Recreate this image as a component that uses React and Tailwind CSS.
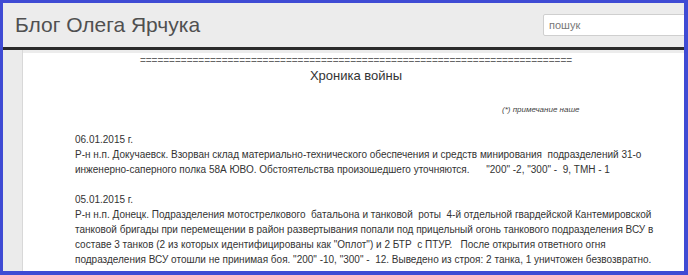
export default function App() {
  const eq = "=".repeat(74);
  return (
    <div className="w-[688px] h-[275px] bg-[#3f4bd4] pt-[3px] pl-[3px] pr-[4px] pb-[4px] overflow-hidden" style={{ fontFamily: '"Liberation Sans", Arial, sans-serif' }}>
      <div className="h-full bg-white flex flex-col overflow-hidden">
        <header className="h-[47px] shrink-0 bg-[#ececec] border-b-[3px] border-[#2b2b2b] flex items-center pl-[12px] overflow-hidden">
          <div className="text-[21px] leading-[24px] text-[#505050]">Блог Олега Ярчука</div>
          <div className="ml-auto w-[150px] mr-[-9px] h-[22px] shrink-0 bg-white border border-[#cfcfcf] rounded-l-[2px] flex items-center pl-[5px] text-[11px] text-[#777]">пошук</div>
        </header>
        <div className="flex-1 flex min-h-0">
          <div className="w-[20px] shrink-0 bg-[#ebebeb] border-r border-[#d8d8d8]" />
          <div className="flex-1 min-w-0 border-t-[3px] border-[#ececec]">
            <div className="pl-[52px] pr-[47px] text-[#333] text-[10px] leading-[15px]">
              <div className="text-center text-[#666] whitespace-nowrap">{eq}</div>
              <div className="text-center text-[13px] leading-[16px] text-[#333]">Хроника войны</div>
              <div className="mt-[21px] pl-[427px] text-[8px] leading-[10px] italic text-[#444] whitespace-nowrap">(*) примечание наше</div>
              <div className="mt-[17px] whitespace-pre">
                <div>06.01.2015 г.</div>
                <div>Р-н н.п. Докучаевск. Взорван склад материально-технического обеспечения и средств минирования  подразделений 31-о</div>
                <div>инженерно-саперного полка 58А ЮВО. Обстоятельства произошедшего уточняются.      "200" -2, "300" -  9, ТМН - 1</div>
                <div>&nbsp;</div>
                <div>05.01.2015 г.</div>
                <div>Р-н н.п. Донецк. Подразделения мотострелкового  батальона и танковой  роты  4-й отдельной гвардейской Кантемировской</div>
                <div>танковой бригады при перемещении в район развертывания попали под прицельный огонь танкового подразделения ВСУ в</div>
                <div>составе 3 танков (2 из которых идентифицированы как "Оплот") и 2 БТР  с ПТУР.   После открытия ответного огня</div>
                <div>подразделения ВСУ отошли не принимая боя. "200" -10, "300" -  12. Выведено из строя: 2 танка, 1 уничтожен безвозвратно.</div>
              </div>
            </div>
          </div>
        </div>
      </div>
    </div>
  );
}
